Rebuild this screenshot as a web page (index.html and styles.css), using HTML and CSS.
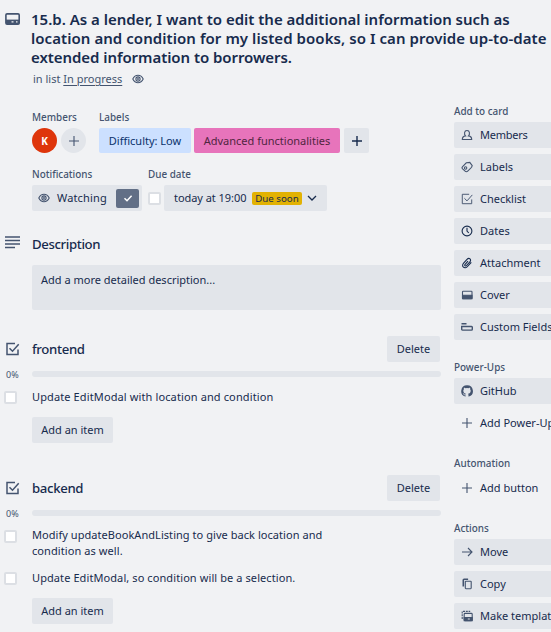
FILE: index.html
```html
<!DOCTYPE html>
<html lang="en">
<head>
<meta charset="utf-8">
<title>Card</title>
<link rel="stylesheet" href="styles.css">
</head>
<body>
<svg class="defs" width="0" height="0">
  <symbol id="eye" viewBox="0 0 12 12"><path d="M.8 6C2 3.500 3.800 2.300 6 2.300S10 3.500 11.200 6C10 8.500 8.200 9.700 6 9.700S2 8.500.8 6z"/><circle cx="6" cy="6" r="2.100"/><circle cx="6" cy="6" r=".4"/></symbol>
  <symbol id="plus" viewBox="0 0 12 12"><path d="M6 1v10M1 6h10"/></symbol>
  <symbol id="check" viewBox="0 0 14 14"><path d="M12.500 7.500v5h-11v-11h8M4 6.200l3 3 6.200-7"/></symbol>
</svg>
<div class="card">
  <header class="head">
    <svg class="hicon" viewBox="0 0 16 14"><rect x=".9" y="1.900" width="13.300" height="10.300" rx="1.200" fill="none" stroke="#44546f" stroke-width="1.600"/><path d="M1 7.600h13.200v4.500H1z" fill="#44546f"/><path d="M6.500 9.800h2M11 9.800h1.500" stroke="#f1f2f4" stroke-width="1.200"/></svg>
    <div>
      <h1><span class="t1">15.b. As a lender, I want to edit the additional information such as</span><br><span class="t2">location and condition for my listed books, so I can provide up-to-date</span><br><span class="t3">extended information to borrowers.</span></h1>
      <p class="inlist">in list <a>In progress</a><svg class="ic eye"><use href="#eye"/></svg></p>
    </div>
  </header>
  <div class="body">
    <main>
      <div class="meta">
        <section class="members"><h3>Members</h3><div class="line"><span class="avatar">K</span><span class="avatar add"><svg class="ic"><use href="#plus"/></svg></span></div></section>
        <section><h3>Labels</h3><div class="line"><span class="label blue"><span>Difficulty: Low</span></span><span class="label pink"><span>Advanced functionalities</span></span><span class="label more"><svg class="ic"><use href="#plus"/></svg></span></div></section>
      </div>
      <div class="meta second">
        <section class="notif"><h3>Notifications</h3><div class="watch"><svg class="ic"><use href="#eye"/></svg><span class="wtxt">Watching</span><span class="tick"><svg class="ic" viewBox="0 0 12 12"><path d="M2.500 6.200l2.500 2.500 4.600-5"/></svg></span></div></section>
        <section><h3>Due date</h3><div class="line due"><span class="box"></span><div class="date"><span class="dtxt">today at 19:00</span><span class="soon">Due soon</span><svg class="ic" viewBox="0 0 12 12"><path d="M2 4l4 4 4-4"/></svg></div></div></section>
      </div>
      <div class="sec desc"><svg class="secic lines" viewBox="0 0 15 14"><path d="M0 1h15M0 4.500h15M0 8h15M0 11.500h10"/></svg><h2>Description</h2></div>
      <div class="textarea"><span>Add a more detailed description...</span></div>

      <div class="sec front"><svg class="secic"><use href="#check"/></svg><h2 class="bk">frontend</h2><span class="btn del">Delete</span></div>
      <div class="progress"><span class="pct">0%</span><span class="bar"></span></div>
      <div class="item one"><span class="box"></span><p><span class="i1">Update EditModal with location and condition</span></p></div>
      <span class="btn additem">Add an item</span>

      <div class="sec back"><svg class="secic"><use href="#check"/></svg><h2 class="bk">backend</h2><span class="btn del">Delete</span></div>
      <div class="progress"><span class="pct">0%</span><span class="bar"></span></div>
      <div class="item two"><span class="box"></span><p><span class="i2">Modify updateBookAndListing to give back location and</span><br><span class="i3">condition as well.</span></p></div>
      <div class="item three"><span class="box"></span><p><span class="i4">Update EditModal, so condition will be a selection.</span></p></div>
      <span class="btn additem last">Add an item</span>
    </main>
    <aside>
      <h3 class="first">Add to card</h3>
      <div class="side"><svg class="ic" viewBox="0 0 12 12"><path d="M1.300 10.500c0-2.300 1.300-3.300 3.200-3.600C3.500 6 3.400 4.800 3.600 3.500 4 .8 8 .8 8.400 3.500c.2 1.300.1 2.500-.9 3.400 1.900.3 3.200 1.300 3.200 3.600z"/></svg><span class="mem">Members</span></div>
      <div class="side"><svg class="ic" viewBox="0 0 12 12"><path d="M5.300 1.800L8.800 1.400 11.200 4.600 10.600 6.300 6.700 10.200c-.8.8-1.800.8-2.600 0L1.600 7.900C.8 7.100.8 6.400 1.600 5.600z"/><circle cx="4.600" cy="7" r="1.200"/></svg><span>Labels</span></div>
      <div class="side"><svg class="ic" viewBox="0 0 14 14"><use href="#check"/></svg><span>Checklist</span></div>
      <div class="side dark"><svg class="ic" viewBox="0 0 12 12"><circle cx="6" cy="6" r="4.900"/><path d="M6 2.800V6l1.800 2"/></svg><span>Dates</span></div>
      <div class="side dark"><svg class="ic" viewBox="0 0 12 12"><path d="M10.300 5.300L6.500 9.500c-1.200 1.400-3 1.600-4.100.6s-1-2.600.2-3.900L6 2.400c.9-1 2.200-1.200 3-.5s.8 1.900-.1 2.900L5.500 8.500c-.5.600-1.100.6-1.500.3s-.4-.9.100-1.500L7 4.100"/></svg><span>Attachment</span></div>
      <div class="side"><svg class="ic" viewBox="0 0 12 12"><rect x="1.500" y="2.300" width="9.500" height="7.400" rx=".6"/><path d="M1.500 6.200H11v3.500H1.500z" fill="#44546f"/></svg><span>Cover</span></div>
      <div class="side"><svg class="ic" viewBox="0 0 12 12"><path d="M.5 2.700h5M1 5.500h9.500c.6 0 .8.300.8.800v2c0 .5-.2.800-.8.800h-9c-.6 0-.8-.3-.8-.8V5.500z" stroke-width="1.400"/></svg><span>Custom Fields</span></div>
      <h3 class="pu">Power-Ups</h3>
      <div class="side"><svg class="ic fill" viewBox="0 0 16 16"><path d="M8 .4a7.700 7.700 0 0 0-2.430 15c.38.070.530-.160.530-.370v-1.400c-2.140.46-2.600-.9-2.600-.9-.350-.9-.850-1.130-.850-1.130-.7-.48.050-.47.050-.47.770.050 1.180.8 1.180.8.690 1.170 1.800.83 2.240.640.070-.5.270-.84.490-1.030-1.710-.2-3.510-.86-3.510-3.800 0-.84.300-1.530.8-2.070-.090-.2-.350-.98.070-2.040 0 0 .650-.2 2.120.79a7.300 7.300 0 0 1 3.860 0c1.470-1 2.120-.79 2.120-.79.420 1.060.160 1.840.080 2.040.49.540.79 1.230.79 2.070 0 2.960-1.800 3.610-3.520 3.800.280.240.53.710.53 1.430v2.110c0 .2.140.44.530.370A7.700 7.700 0 0 0 8 .4z"/></svg><span>GitHub</span></div>
      <div class="side plain"><svg class="ic"><use href="#plus"/></svg><span>Add Power-Ups</span></div>
      <h3 class="au">Automation</h3>
      <div class="side plain"><svg class="ic"><use href="#plus"/></svg><span>Add button</span></div>
      <h3 class="act">Actions</h3>
      <div class="side"><svg class="ic" viewBox="0 0 12 12"><path d="M1 6h10M7 2l4 4-4 4"/></svg><span>Move</span></div>
      <div class="side"><svg class="ic" viewBox="0 0 12 12"><path d="M2.300 8.500V2c0-.5.200-.8.800-.8h4" stroke-width="1.600"/><rect x="4.300" y="3.200" width="5.900" height="7.500" rx=".6"/></svg><span>Copy</span></div>
      <div class="side"><svg class="ic" viewBox="0 0 12 12"><path d="M1.200 9V1.400h8" stroke-dasharray="2 .8"/><rect x="3.200" y="3.400" width="8" height="7.200" rx=".8"/><path d="M3.200 7.600h8v3h-8z" fill="#44546f"/><path d="M6.800 9h2" stroke="#fff" stroke-width=".8"/></svg><span>Make template</span></div>
    </aside>
  </div>
</div>
</body>
</html>
```
FILE: styles.css
```css
* { box-sizing: border-box; }
body { margin: 0; background: #f1f2f4; color: #172b4d; font: 11px/16px "Noto Sans", "Open Sans", sans-serif; overflow: hidden; }
.card { width: 551px; height: 632px; overflow: hidden; white-space: nowrap; }
.defs { display: block; }
h1, h2, h3, p { margin: 0; }
svg { flex: none; }
.ic { width: 12px; height: 12px; fill: none; stroke: #44546f; stroke-width: 1.1; }
.head { display: flex; height: 107px; padding: 10px 0 0 5px; }
.hicon { width: 16px; height: 14px; margin: 2px 10px 0 0; }
h1 { font-size: 15px; line-height: 19px; font-weight: 600; }
.t1 { letter-spacing: -.01px; }
.t2 { letter-spacing: .06px; }
.t3 { letter-spacing: -.06px; }
.inlist { margin: 4px 0 0 2px; display: flex; align-items: center; color: #44546f; white-space: pre; }
.inlist a { text-decoration: underline; text-underline-offset: 2px; }
.inlist .eye { margin-left: 10px; }
.body { display: flex; }
main { width: 441px; padding-left: 5px; flex: none; }
aside { margin: -4px 0 0 13px; width: 128px; flex: none; }
h3 { font-size: 9.9px; line-height: 16px; font-weight: 500; color: #44546f; }
.meta { display: flex; padding: 2px 0 0 27px; height: 57px; }
.line { display: flex; margin-top: 3px; }
.members { width: 67px; }
.avatar { width: 25px; height: 25px; border-radius: 50%; background: #de350b; color: #fff; font-weight: 700; font-size: 10px; display: flex; align-items: center; justify-content: center; }
.avatar.add { background: #e2e5ea; margin-left: 4px; }
.label { height: 25px; display: flex; align-items: center; justify-content: center; border-radius: 2px; margin-right: 3px; }
.blue { width: 92px; background: #cce0ff; color: #09326c; }
.pink { width: 146px; background: #e774bb; color: #50253f; margin-right: 4px; }
.more { width: 25px; background: #e2e5ea; }
.more .ic { stroke: #172b4d; stroke-width: 1.400; }
.notif { width: 116px; }
.watch { width: 110px; height: 26px; margin-top: 3px; background: #e2e5ea; border-radius: 2px; display: flex; align-items: center; padding: 0 3px 0 6px; }
.wtxt { margin-left: 7px; flex: 1; letter-spacing: .15px; }
.tick { width: 23px; height: 19px; border-radius: 2px; background: #626f86; display: flex; align-items: center; justify-content: center; }
.tick .ic { stroke: #fff; stroke-width: 1.500; }
.box { width: 13px; height: 13px; border: 2px solid #dcdfe4; border-radius: 2px; background: #fff; flex: none; }
.due { align-items: center; }
.date { margin-left: 3px; width: 163px; height: 26px; background: #e2e5ea; border-radius: 2px; display: flex; align-items: center; padding-left: 10px; }
.dtxt { width: 78px; letter-spacing: -.05px; }
.soon { width: 50px; height: 13px; line-height: 13px; background: #e2b203; border-radius: 2px; font-size: 9.700px; text-align: center; margin-right: 4px; }
.date .ic { stroke: #172b4d; stroke-width: 1.300; }
.sec { display: flex; align-items: center; height: 26px; }
.secic { width: 15px; height: 14px; margin-right: 12px; fill: none; stroke: #44546f; stroke-width: 1.500; }
.lines { margin-top: -2px; }
h2 { font-size: 13.2px; line-height: 18px; font-weight: 500; flex: 1; letter-spacing: -.38px; }
.bk { letter-spacing: -.34px; }
.desc { margin-top: 10px; }
.textarea { margin: 8px 0 0 27px; height: 45px; width: 409px; background: #e2e5ea; border-radius: 2px; padding: 7px 9px; }
.btn { display: flex; align-items: center; justify-content: center; height: 26px; background: #e2e5ea; border-radius: 2px; }
.del { width: 53px; margin-right: 1px; }
.front { margin-top: 26px; }
.progress { display: flex; align-items: center; height: 12px; margin-top: 6px; }
.pct { width: 27px; font-size: 9px; padding: 1px 0 0 1px; color: #44546f; }
.bar { height: 6px; width: 409px; border-radius: 3px; background: #e2e5ea; }
.item { display: flex; }
.item p { margin-left: 15px; }
.item .box { margin: 2px 0 0 -1px; }
.i1 { letter-spacing: .12px; }
.i2 { letter-spacing: .05px; }
.i3 { letter-spacing: .08px; }
.i4 { letter-spacing: .09px; }
.one { margin-top: 9px; height: 28px; }
.additem { width: 81px; margin-left: 27px; }
.back { margin-top: 32px; }
.two { margin-top: 8px; }
.item.two .box { margin-top: 3px; }
.three { margin-top: 11px; }
.last { margin-top: 12px; }
.side { height: 26px; margin-bottom: 6px; background: #e2e5ea; border-radius: 2px; display: flex; align-items: center; padding-left: 7px; }
.side .ic { margin-right: 7px; }
.side.plain { background: none; }
.dark .ic { stroke: #172b4d; }
.ic.fill { fill: #44546f; stroke: none; }
.mem { letter-spacing: -.25px; }
aside h3 { margin-bottom: 2px; }
aside .first { margin-bottom: 3px; }
aside .pu { margin: 19px 0 3px; }
aside .au { margin-top: 19px; margin-bottom: 4px; }
aside .act { margin-top: 19px; margin-bottom: 3px; }
```
